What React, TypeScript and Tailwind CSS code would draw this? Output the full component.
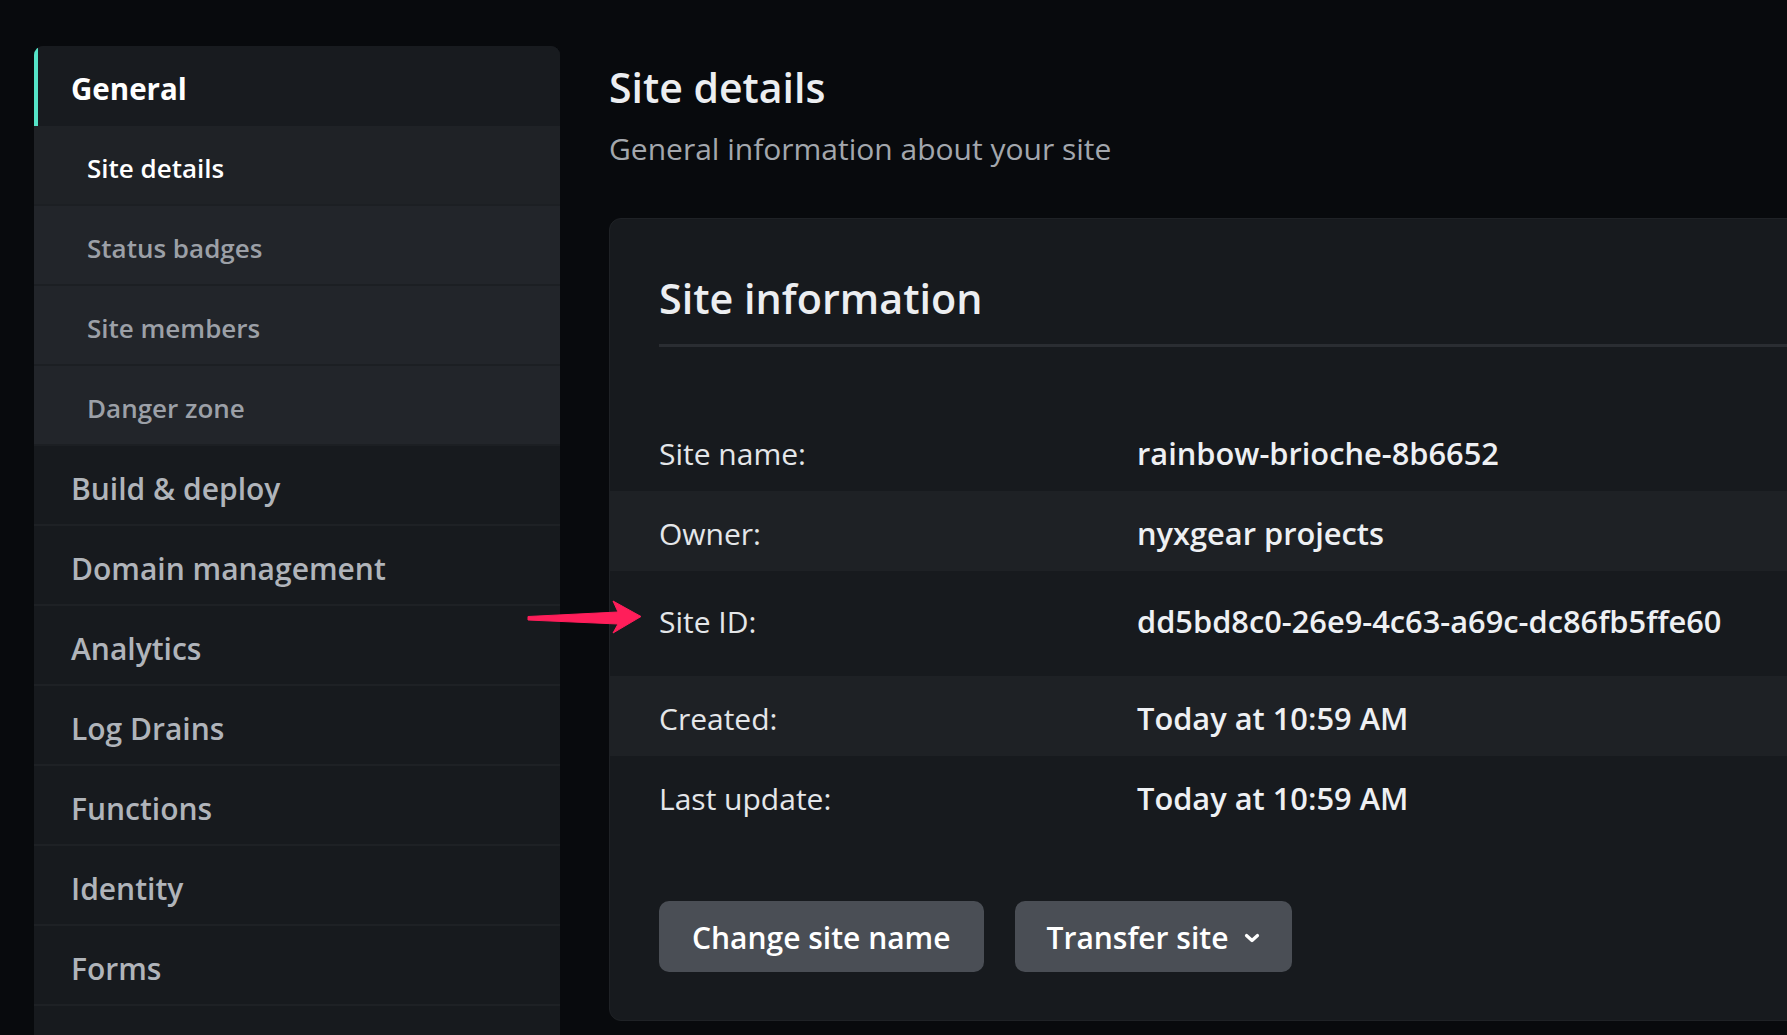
import React from "react";

const subItems = [
  { label: "Site details", active: true },
  { label: "Status badges", active: false },
  { label: "Site members", active: false },
  { label: "Danger zone", active: false },
];

const mainItems = [
  "Build & deploy",
  "Domain management",
  "Analytics",
  "Log Drains",
  "Functions",
  "Identity",
  "Forms",
  "",
];

const rows = [
  { label: "Site name:", value: "rainbow-brioche-8b6652", band: false, tall: false },
  { label: "Owner:", value: "nyxgear projects", band: true, tall: false },
  { label: "Site ID:", value: "dd5bd8c0-26e9-4c63-a69c-dc86fb5ffe60", band: false, tall: true },
  { label: "Created:", value: "Today at 10:59 AM", band: true, tall: false },
  { label: "Last update:", value: "Today at 10:59 AM", band: false, tall: false },
];

export default function App() {
  return (
    <div className="relative flex h-[1035px] w-full gap-[49px] overflow-hidden bg-[#080a0d] pl-[34px] pt-[46px] font-['Open_Sans',sans-serif]">
      <aside className="w-[526px] shrink-0 overflow-hidden rounded-t-[9px] bg-[#171a1e]">
        <div className="flex h-[80px] items-center border-l-4 border-[#55e3c7] bg-[#181b1f] pl-[33px] pt-[6px] text-[29.5px] font-bold text-white">
          General
        </div>
        {subItems.map((s) => (
          <div
            key={s.label}
            className={
              s.active
                ? "flex h-[80px] items-center border-b-2 border-[#1c1f23] bg-[#1f2226] pl-[53px] pt-[6px] text-[26px] font-semibold text-white"
                : "flex h-[80px] items-center border-b-2 border-[#1c1f23] bg-[#22252a] pl-[53px] pt-[6px] text-[26px] font-semibold text-[#9ca0a7]"
            }
          >
            {s.label}
          </div>
        ))}
        {mainItems.map((m, i) => (
          <div
            key={i}
            className="flex h-[80px] items-center border-b-2 border-[#1e2125] pl-[37px] pt-[6px] text-[30px] font-semibold text-[#b0b4ba]"
          >
            {m}
          </div>
        ))}
      </aside>

      <main className="min-w-0 flex-1 pt-[17px]">
        <h1 className="text-[41px] font-semibold leading-[48px] text-[#eceef1]">Site details</h1>
        <p className="mt-[18px] text-[30px] leading-[40px] text-[#a3a7ad]">
          General information about your site
        </p>

        <section className="mt-[49px] w-[1300px] rounded-[12px] border border-[#1f2226] bg-[#171a1e] pb-[48px] pt-[55px]">
          <div className="pl-[49px]">
            <h2 className="text-[41.3px] font-semibold leading-[48px] text-[#eceef1]">Site information</h2>
            <div className="mt-[22px] h-[3px] bg-[#2a2d32]" />
          </div>

          <div className="mt-[64px]">
            {rows.map((r) => (
              <div
                key={r.label}
                className={
                  (r.band ? "bg-[#1e2125] " : "") +
                  (r.tall ? "h-[105px] pb-[5px] " : "h-[80px] pt-[5px] ") +
                  "flex items-center pl-[49px] text-[30px]"
                }
              >
                <div className="w-[478px] shrink-0 text-[#e4e6e9]">{r.label}</div>
                <div className="text-[30.8px] font-semibold text-[#eef0f3]">{r.value}</div>
              </div>
            ))}
          </div>

          <div className="mt-[65px] flex gap-[31px] pl-[49px]">
            <button className="flex h-[71px] items-center rounded-[10px] bg-[#4a4e55] px-[33px] pt-[2px] text-[30px] font-semibold text-white">
              Change site name
            </button>
            <button className="flex h-[71px] items-center gap-[16px] rounded-[10px] bg-[#4a4e55] pl-[32px] pr-[32px] pt-[2px] text-[30px] font-semibold text-white">
              Transfer site
              <svg width="16" height="12" viewBox="0 0 16 12" fill="none">
                <path d="M2.5 3.5 L8 8.5 L13.5 3.5" stroke="white" strokeWidth="3.2" strokeLinecap="round" strokeLinejoin="round" />
              </svg>
            </button>
          </div>
        </section>
      </main>

      <svg
        className="pointer-events-none absolute left-[500px] top-[580px]"
        width="160"
        height="80"
        viewBox="0 0 160 80"
      >
        <polygon
          points="28,36.5 118,32 113,21 141,36.5 113,53 118,44 28,40"
          fill="#ff1e5a"
          stroke="#ff1e5a"
          strokeWidth="1"
          strokeLinejoin="round"
        />
      </svg>
    </div>
  );
}
